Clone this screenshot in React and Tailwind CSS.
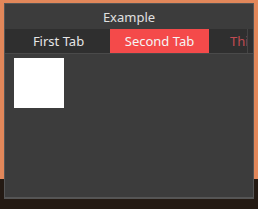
export default function App() {
  return (
    <div className="relative w-[258px] h-[209px] overflow-hidden bg-[#e2875a]" style={{ fontFamily: '"Noto Sans", sans-serif' }}>
      <div className="absolute left-0 right-0 bottom-0 h-[30px] bg-[#241a13]" />
      <div className="absolute left-[4px] top-[3px] w-[250px] h-[196px] bg-[#3c3c3c] border border-[#555] border-b-2 flex flex-col">
        <div className="h-[25px] pt-[2px] flex items-center justify-center text-[13px] text-[#e0e0e0]">Example</div>
        <div className="h-[25px] bg-[#2f2f2f] border-b border-[#4a4a4a] flex items-stretch text-[13px] pl-[2px] pr-[5px] overflow-hidden">
          <div className="w-[103px] pt-[2px] flex items-center justify-center text-[#e6e6e6]">First Tab</div>
          <div className="w-[99px] pt-[2px] flex items-center justify-center bg-[#f44a4a] text-[#f5f5f5]">Second Tab</div>
          <div className="flex-1 pt-[2px] flex items-center pl-[21px] text-[#c04b52] whitespace-nowrap overflow-hidden border-r border-[#444]">Third Tab</div>
        </div>
        <div className="pt-[4px] pl-[9px]">
          <div className="w-[50px] h-[50px] bg-white" />
        </div>
      </div>
    </div>
  );
}
